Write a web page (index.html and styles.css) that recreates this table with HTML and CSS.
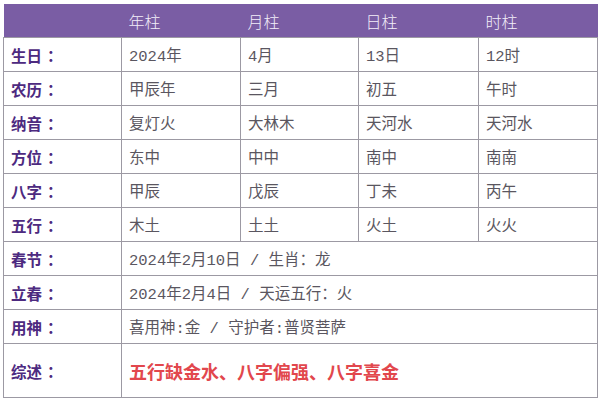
FILE: index.html
```html
<!DOCTYPE html>
<html lang="zh-CN">
<head>
<meta charset="utf-8">
<link rel="stylesheet" href="styles.css">
</head>
<body>
<table class="bazi">
  <colgroup>
    <col class="c1"><col class="c2"><col class="c3"><col class="c4"><col class="c5">
  </colgroup>
  <thead>
    <tr class="head"><th></th><th>年柱</th><th>月柱</th><th>日柱</th><th>时柱</th></tr>
  </thead>
  <tbody>
    <tr><td class="label">生日<span class="colon">：</span></td><td>2024年</td><td>4月</td><td>13日</td><td>12时</td></tr>
    <tr><td class="label">农历<span class="colon">：</span></td><td>甲辰年</td><td>三月</td><td>初五</td><td>午时</td></tr>
    <tr><td class="label">纳音<span class="colon">：</span></td><td>复灯火</td><td>大林木</td><td>天河水</td><td>天河水</td></tr>
    <tr><td class="label">方位<span class="colon">：</span></td><td>东中</td><td>中中</td><td>南中</td><td>南南</td></tr>
    <tr><td class="label">八字<span class="colon">：</span></td><td>甲辰</td><td>戊辰</td><td>丁未</td><td>丙午</td></tr>
    <tr><td class="label">五行<span class="colon">：</span></td><td>木土</td><td>土土</td><td>火土</td><td>火火</td></tr>
    <tr><td class="label">春节<span class="colon">：</span></td><td colspan="4">2024年2月10日 / 生肖：龙</td></tr>
    <tr><td class="label">立春<span class="colon">：</span></td><td colspan="4">2024年2月4日 / 天运五行：火</td></tr>
    <tr><td class="label">用神<span class="colon">：</span></td><td colspan="4">喜用神:金 / 守护者:普贤菩萨</td></tr>
    <tr class="summary"><td class="label">综述<span class="colon">：</span></td><td colspan="4"><span class="hl">五行缺金水、八字偏强、八字喜金</span></td></tr>
  </tbody>
</table>
</body>
</html>
```
FILE: styles.css
```css
html, body {
  margin: 0;
  padding: 0;
  background: #ffffff;
}
body {
  padding: 4px 3px 0 3px;
}
.bazi {
  border-collapse: collapse;
  width: 594px;
  table-layout: fixed;
  font-family: "Liberation Mono", "Noto Sans CJK SC", monospace;
  font-size: 15.5px;
  color: #5a5660;
}
.c1 { width: 118px; }
.c2 { width: 119px; }
.c3 { width: 118px; }
.c4 { width: 120px; }
.c5 { width: 119px; }
.head th {
  background: #7a5da4;
  color: #f3eefa;
  font-family: "Noto Sans CJK SC", sans-serif;
  font-weight: 300;
  font-size: 16px;
  text-align: left;
  height: 33px;
  padding: 0 7px;
  border: none;
}
td {
  border: 1.5px solid #9c99a3;
  height: 33px;
  padding: 0 7px;
  text-align: left;
  vertical-align: middle;
}
td.label {
  font-family: "Noto Sans CJK SC", sans-serif;
  font-weight: 700;
  font-size: 15.5px;
  color: #4d2a80;
}
.colon {
  display: inline-block;
  margin-left: 5px;
}
.summary td {
  height: 53px;
}
.hl {
  font-family: "Noto Sans CJK SC", sans-serif;
  font-weight: 700;
  font-size: 18px;
  color: #e2474d;
}
```
